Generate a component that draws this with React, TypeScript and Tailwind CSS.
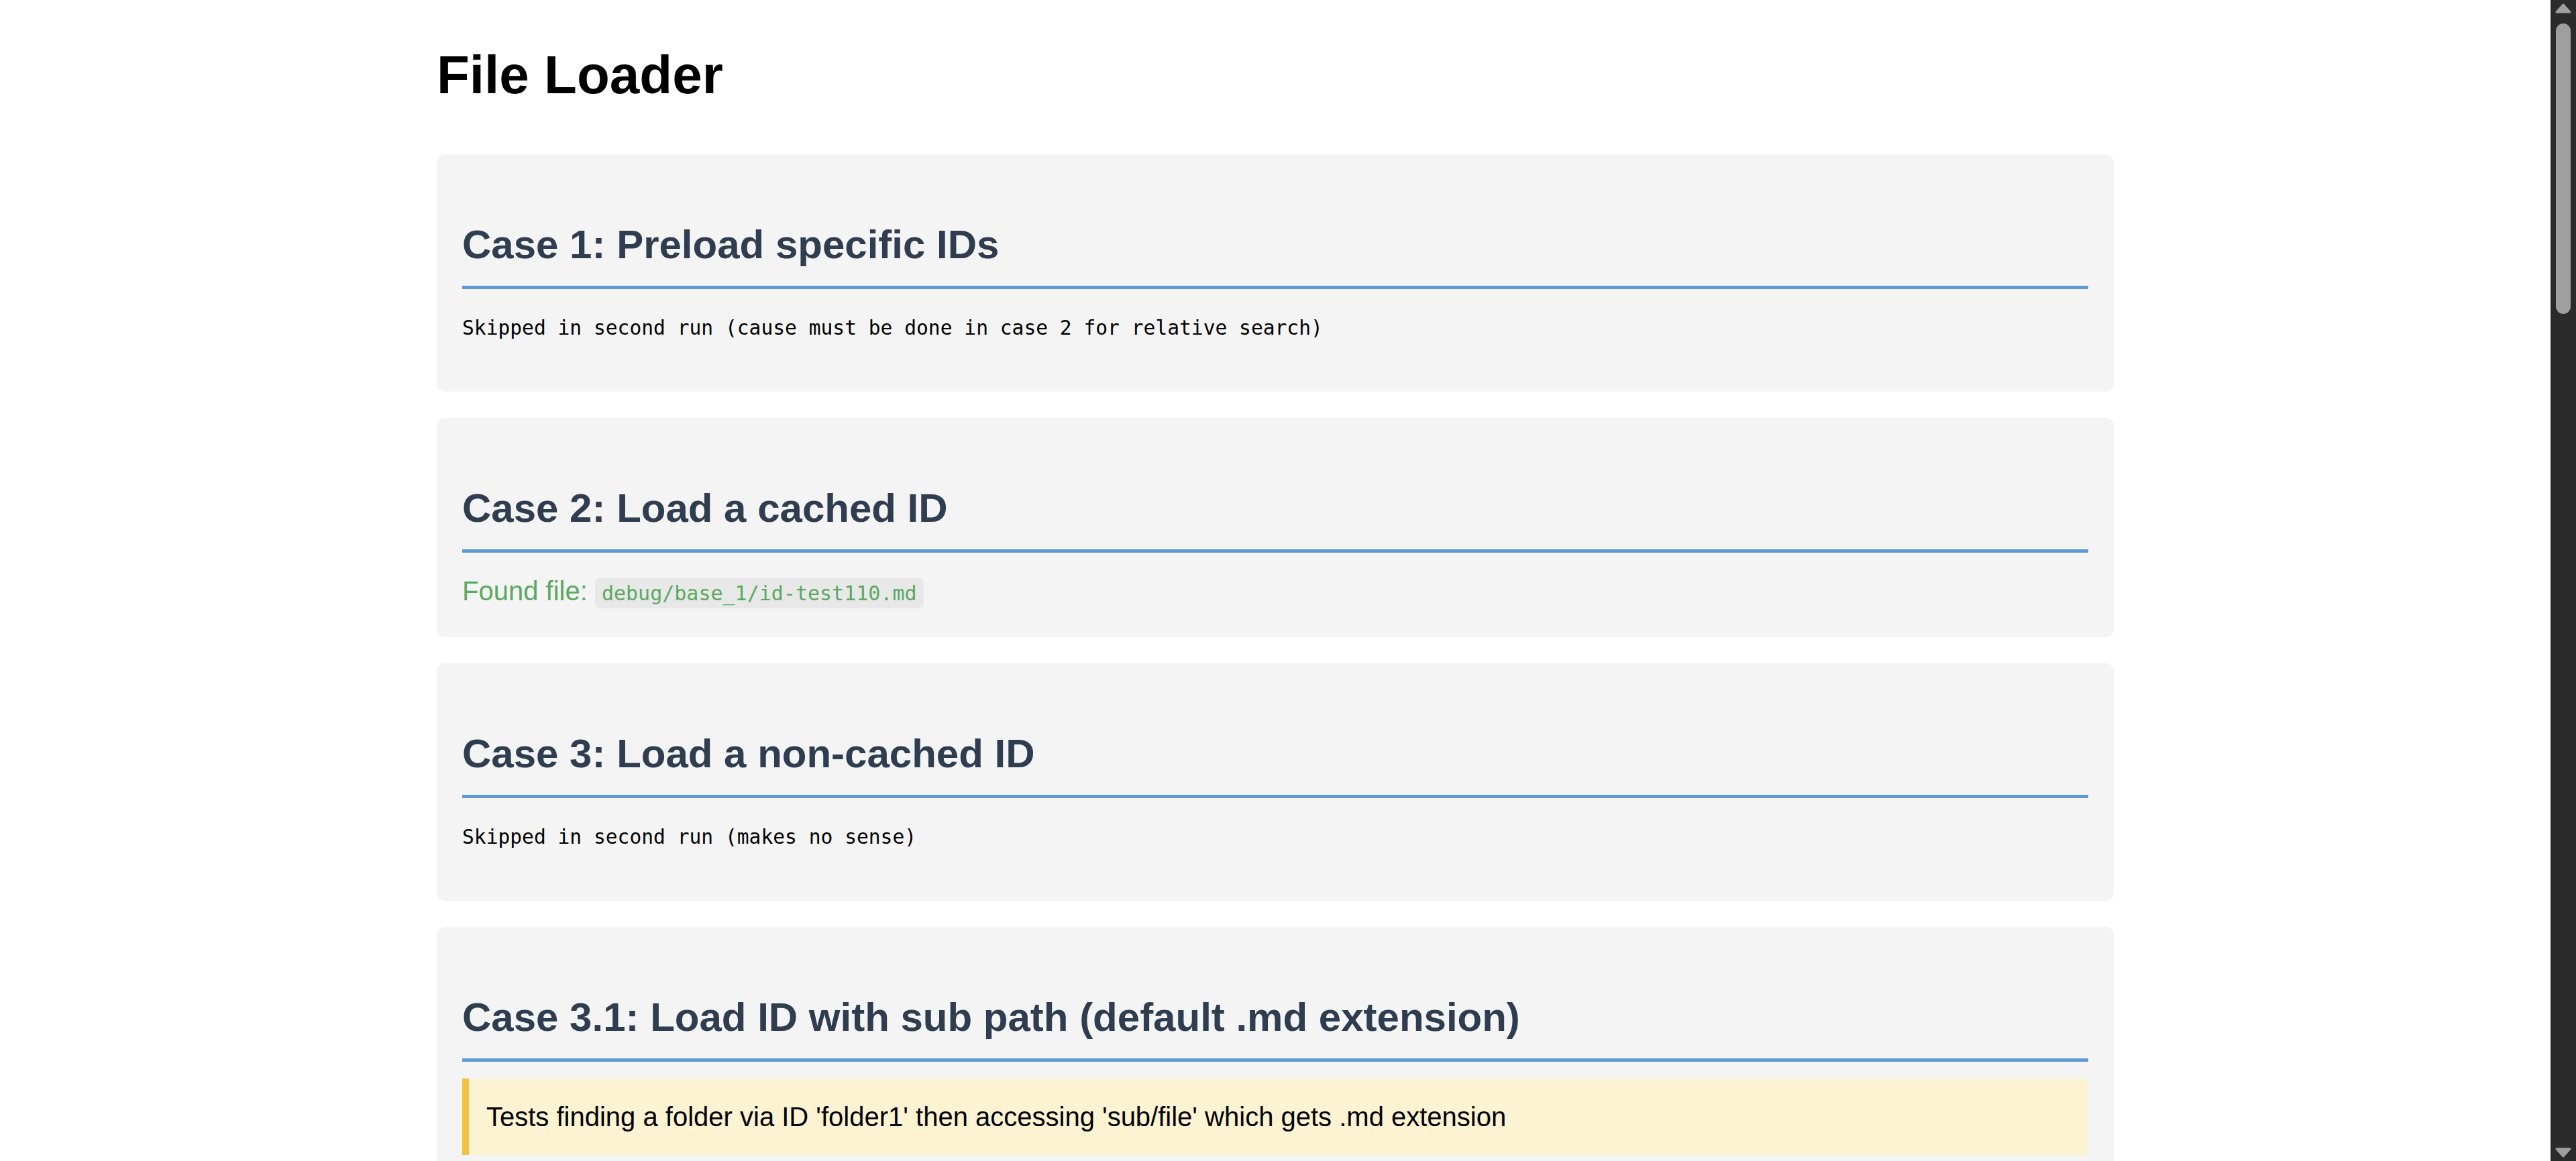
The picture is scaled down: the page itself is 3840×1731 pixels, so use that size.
import type { ReactNode } from 'react';

const sans = 'font-["Liberation_Sans",Arial,sans-serif]';
const mono = 'font-["DejaVu_Sans_Mono","Liberation_Mono",monospace]';

function Card({ title, children, pb }: { title: string; children: ReactNode; pb: string }) {
  return (
    <section className={`rounded-[12px] bg-[#f4f4f4] px-[38px] pt-[100px] ${pb}`}>
      <h2 className="border-b-[5px] border-[#5d9bd8] pb-[27px] text-[60px] font-bold leading-[69px] text-[#2e3d50]">
        {title}
      </h2>
      {children}
    </section>
  );
}

function ScrollArrow({ down }: { down?: boolean }) {
  return (
    <svg width="24" height="15" viewBox="0 0 24 15" className={down ? 'rotate-180' : ''}>
      <path d="M12 2 L22 13 L2 13 Z" fill="#9f9f9f" stroke="#9f9f9f" strokeWidth="3" strokeLinejoin="round" />
    </svg>
  );
}

export default function App() {
  return (
    <div className={`flex h-[1731px] overflow-hidden bg-white ${sans}`}>
      <main className="min-w-0 flex-1">
        <div className="mx-auto w-[2500px] pt-[66px]">
          <h1 className="mb-[72px] text-[80px] font-bold leading-[92px] text-black">File Loader</h1>

          <div className="flex flex-col gap-[39px]">
            {/* case 1 */}
            <Card title="Case 1: Preload specific IDs" pb="pb-[77px]">
              <p className={`mt-[41px] text-[29.6px] leading-[35px] text-black ${mono}`}>
                Skipped in second run (cause must be done in case 2 for relative search)
              </p>
            </Card>

            {/* case 2 */}
            <Card title="Case 2: Load a cached ID" pb="pb-[46px]">
              <p className="mt-[34px] text-[40px] leading-[46px] text-[#5aa960]">
                Found file:{' '}
                <code className={`rounded-[7px] bg-[#e8e8e8] px-[10px] py-[5px] text-[30px] leading-none ${mono}`}>
                  debug/base_1/id-test110.md
                </code>
              </p>
            </Card>

            {/* case 3 */}
            <Card title="Case 3: Load a non-cached ID" pb="pb-[77px]">
              <p className={`mt-[41px] text-[29.6px] leading-[35px] text-black ${mono}`}>
                Skipped in second run (makes no sense)
              </p>
            </Card>

            {/* case 3.1 - runs past the fold */}
            <Card title="Case 3.1: Load ID with sub path (default .md extension)" pb="pb-[46px]">
              <div className="mt-[25px] border-l-[10px] border-[#f2c144] bg-[#fcf3d2] py-[34px] pl-[26px] text-[40px] leading-[46px] text-black">
                Tests finding a folder via ID 'folder1' then accessing 'sub/file' which gets .md extension
              </div>
            </Card>
          </div>
        </div>
      </main>

      {/* scrollbar */}
      <div className="flex w-[38px] shrink-0 flex-col items-center bg-[#2b2b2b] py-[5px]">
        <ScrollArrow />
        <div className="mt-[15px] h-[433px] w-[22px] rounded-full bg-[#9f9f9f]" />
        <div className="flex-1" />
        <ScrollArrow down />
      </div>
    </div>
  );
}
